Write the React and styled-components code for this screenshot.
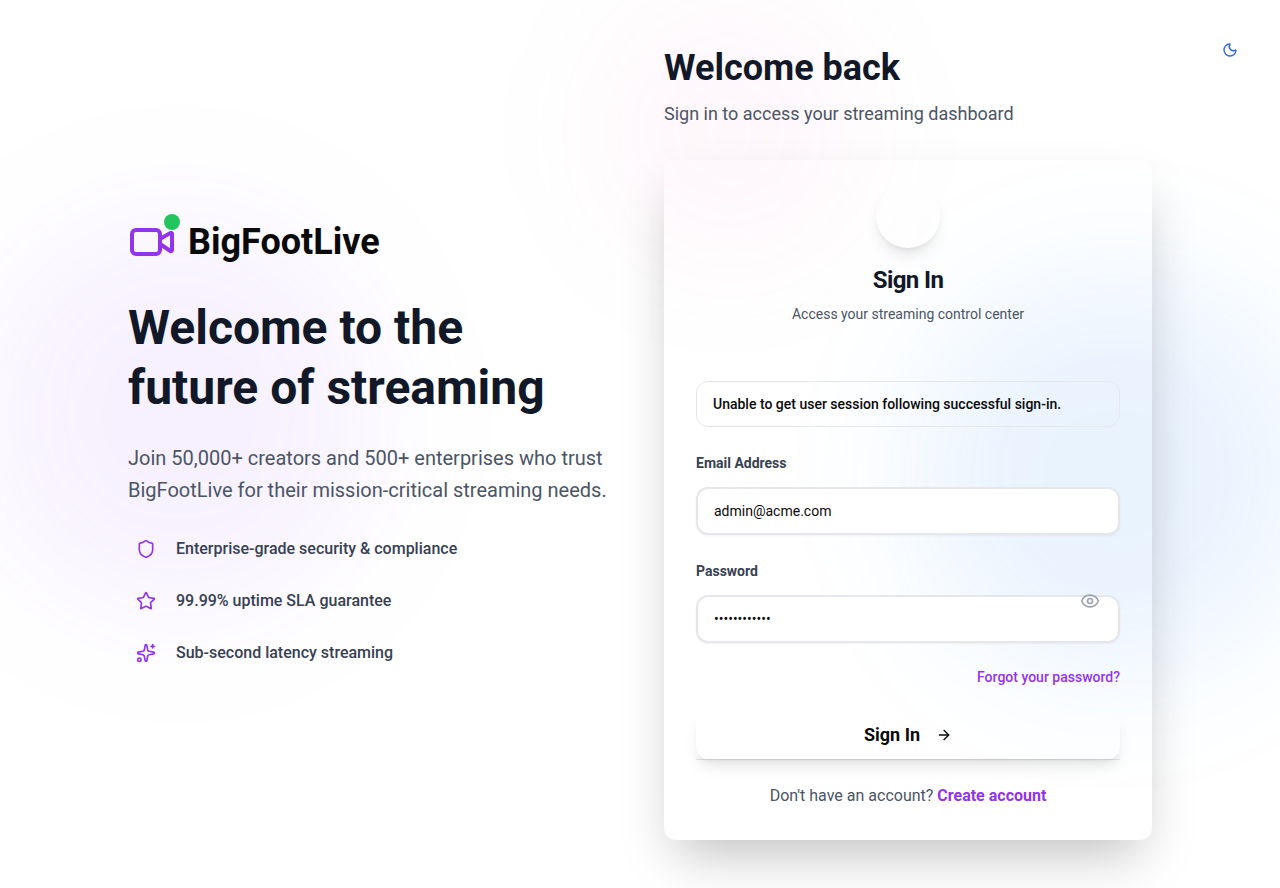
import React, { useState } from "react";
import styled, { createGlobalStyle } from "styled-components";
import { ArrowRight, Eye, Moon, Shield, Sparkles, Star, Video } from "lucide-react";

const GlobalStyle = createGlobalStyle`
  *, *::before, *::after { box-sizing: border-box; }
  body {
    margin: 0;
    background: #ffffff;
    color: #0a0a0a;
    font-family: Roboto, "Liberation Sans", sans-serif;
    font-size: 16px;
    line-height: 24px;
  }
  h1, h2, h3, p, ul { margin: 0; padding: 0; }
  ul { list-style: none; }
  button, input { font: inherit; color: inherit; }
`;

const Page = styled.div`
  position: relative;
  min-height: 100vh;
  display: flex;
  align-items: center;
  justify-content: center;
  padding: 48px 32px;
  overflow: hidden;
`;

const Backdrop = styled.div`
  position: absolute;
  inset: 0;
  pointer-events: none;
`;

const Blob = styled.div`
  position: absolute;
  left: ${(p) => p.$x};
  top: ${(p) => p.$y};
  width: ${(p) => p.$size}px;
  height: ${(p) => p.$size}px;
  border-radius: 50%;
  background: ${(p) => p.$fill};
  transform: translate(-50%, -50%);
  filter: blur(64px);
`;

const ThemeToggle = styled.button`
  position: absolute;
  top: 32px;
  right: 32px;
  display: flex;
  padding: 10px;
  border: 0;
  border-radius: 8px;
  background: transparent;
  color: #2563eb;
  cursor: pointer;
`;

const Columns = styled.main`
  position: relative;
  width: 100%;
  max-width: 1024px;
  display: grid;
  grid-template-columns: repeat(2, minmax(0, 1fr));
  gap: 48px;
  align-items: center;
`;

const Intro = styled.section`
  display: flex;
  flex-direction: column;
  gap: 24px;
`;

const Brand = styled.div`
  display: flex;
  align-items: center;
  gap: 12px;
  margin-bottom: 8px;
  font-size: 36px;
  line-height: 40px;
  font-weight: 700;
`;

const BrandMark = styled.span`
  position: relative;
  display: flex;
  color: #9333ea;
`;

const LiveDot = styled.span`
  position: absolute;
  top: -4px;
  right: -4px;
  width: 16px;
  height: 16px;
  border-radius: 50%;
  background: #22c55e;
`;

const Headline = styled.h1`
  font-size: 48px;
  line-height: 60px;
  font-weight: 700;
  color: #111827;
`;

const Lead = styled.p`
  font-size: 20px;
  line-height: 32px;
  color: #4b5563;
`;

const Features = styled.ul`
  display: grid;
  gap: 16px;
  margin-top: 1px;
`;

const Feature = styled.li`
  display: flex;
  align-items: center;
  gap: 12px;
  font-weight: 500;
  color: #374151;
`;

const FeatureIcon = styled.span`
  display: flex;
  padding: 8px;
  color: #9333ea;
`;

const Access = styled.section`
  display: flex;
  flex-direction: column;
`;

const AccessTitle = styled.h2`
  font-size: 36px;
  line-height: 40px;
  font-weight: 700;
  color: #111827;
`;

const AccessText = styled.p`
  margin: 12px 0 32px;
  font-size: 18px;
  line-height: 28px;
  color: #4b5563;
`;

const Card = styled.div`
  padding: 24px 32px 32px;
  border-radius: 12px;
  box-shadow: 0 25px 50px -12px rgba(0, 0, 0, 0.25);
`;

const CardHeader = styled.header`
  display: flex;
  flex-direction: column;
  align-items: center;
  padding-bottom: 57px;
`;

const Badge = styled.span`
  width: 64px;
  height: 64px;
  margin-bottom: 16px;
  border-radius: 50%;
  box-shadow: 0 10px 15px -3px rgba(0, 0, 0, 0.1), 0 4px 6px -4px rgba(0, 0, 0, 0.1);
`;

const CardTitle = styled.h3`
  margin-bottom: 8px;
  font-size: 24px;
  line-height: 32px;
  font-weight: 700;
  letter-spacing: -0.025em;
  color: #111827;
`;

const CardText = styled.p`
  font-size: 14px;
  line-height: 20px;
  color: #4b5563;
`;

const Form = styled.form`
  display: flex;
  flex-direction: column;
  gap: 24px;
`;

const Alert = styled.div`
  padding: 12px 16px;
  border: 1px solid #e5e7eb;
  border-radius: 12px;
  font-size: 14px;
  line-height: 20px;
  font-weight: 500;
`;

const Field = styled.div`
  position: relative;
  display: flex;
  flex-direction: column;
  gap: 12px;
`;

const Label = styled.label`
  font-size: 14px;
  line-height: 24px;
  font-weight: 700;
  color: #374151;
`;

const Input = styled.input`
  width: 100%;
  height: 48px;
  padding: 4px 16px;
  border: 2px solid #e5e7eb;
  border-radius: 12px;
  background: #ffffff;
  box-shadow: 0 1px 2px rgba(0, 0, 0, 0.05);
  font-size: 14px;
  outline: none;
`;

const Reveal = styled.button`
  position: absolute;
  top: 32px;
  right: 20px;
  display: flex;
  padding: 0;
  border: 0;
  background: transparent;
  color: #9ca3af;
  cursor: pointer;
`;

const Link = styled.a`
  font-weight: ${(p) => (p.$strong ? 700 : 500)};
  color: #9333ea;
  text-decoration: none;
`;

const ForgotRow = styled.div`
  font-size: 14px;
  line-height: 20px;
  text-align: right;
`;

const SubmitRow = styled.div`
  border-bottom: 1px solid #e5e7eb;
`;

const Submit = styled.button`
  width: 100%;
  height: 48px;
  display: flex;
  align-items: center;
  justify-content: center;
  gap: 16px;
  border: 0;
  border-radius: 12px;
  background: transparent;
  box-shadow: 0 10px 15px -3px rgba(0, 0, 0, 0.1), 0 4px 6px -4px rgba(0, 0, 0, 0.1);
  font-size: 18px;
  line-height: 28px;
  font-weight: 700;
  cursor: pointer;
`;

const SignUp = styled.p`
  text-align: center;
  color: #4b5563;
`;

const features = [
  { icon: Shield, text: "Enterprise-grade security & compliance" },
  { icon: Star, text: "99.99% uptime SLA guarantee" },
  { icon: Sparkles, text: "Sub-second latency streaming" },
];

export default function App() {
  const [email, setEmail] = useState("admin@acme.com");
  const [password, setPassword] = useState("streaming123");
  const [visible, setVisible] = useState(false);

  return (
    <Page>
      <GlobalStyle />
      <Backdrop>
        <Blob $x="14%" $y="414px" $size={400} $fill="rgba(154, 80, 250, 0.08)" />
        <Blob $x="87%" $y="474px" $size={400} $fill="rgba(59, 146, 246, 0.11)" />
        <Blob $x="57%" $y="130px" $size={256} $fill="rgba(236, 72, 170, 0.05)" />
      </Backdrop>
      <Columns>
        <Intro>
          <Brand>
            <BrandMark>
              <Video size={48} />
              <LiveDot />
            </BrandMark>
            BigFootLive
          </Brand>
          <Headline>
            Welcome to the
            <br />
            future of streaming
          </Headline>
          <Lead>
            Join 50,000+ creators and 500+ enterprises who trust BigFootLive for their
            mission-critical streaming needs.
          </Lead>
          <Features>
            {features.map(({ icon: Icon, text }) => (
              <Feature key={text}>
                <FeatureIcon>
                  <Icon size={20} />
                </FeatureIcon>
                {text}
              </Feature>
            ))}
          </Features>
        </Intro>
        <Access>
          <AccessTitle>Welcome back</AccessTitle>
          <AccessText>Sign in to access your streaming dashboard</AccessText>
          <Card>
            <CardHeader>
              <Badge />
              <CardTitle>Sign In</CardTitle>
              <CardText>Access your streaming control center</CardText>
            </CardHeader>
            <Form onSubmit={(e) => e.preventDefault()}>
              <Alert role="alert">Unable to get user session following successful sign-in.</Alert>
              <Field>
                <Label htmlFor="email">Email Address</Label>
                <Input
                  id="email"
                  type="email"
                  value={email}
                  onChange={(e) => setEmail(e.target.value)}
                />
              </Field>
              <Field>
                <Label htmlFor="password">Password</Label>
                <Input
                  id="password"
                  type={visible ? "text" : "password"}
                  value={password}
                  onChange={(e) => setPassword(e.target.value)}
                />
                <Reveal type="button" aria-label="Show password" onClick={() => setVisible(!visible)}>
                  <Eye size={20} />
                </Reveal>
              </Field>
              <ForgotRow>
                <Link href="#forgot">Forgot your password?</Link>
              </ForgotRow>
              <SubmitRow>
                <Submit type="submit">
                  Sign In
                  <ArrowRight size={16} />
                </Submit>
              </SubmitRow>
              <SignUp>
                Don't have an account?{" "}
                <Link $strong href="#signup">
                  Create account
                </Link>
              </SignUp>
            </Form>
          </Card>
        </Access>
      </Columns>
      <ThemeToggle type="button" aria-label="Switch to dark theme">
        <Moon size={16} />
      </ThemeToggle>
    </Page>
  );
}
